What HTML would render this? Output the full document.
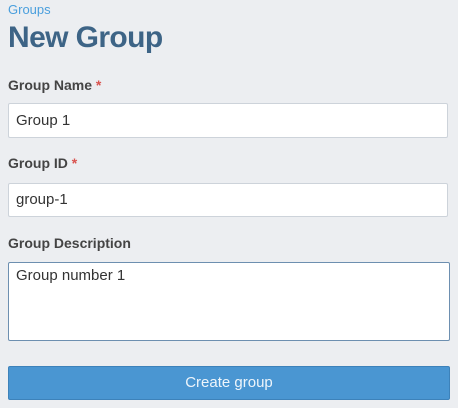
<!DOCTYPE html>
<html><head><style>
body{margin:0;background:#eceef1;font-family:"Liberation Sans",sans-serif;width:458px;height:408px;overflow:hidden;position:relative}
.a{position:absolute}
.bc{left:8px;top:2px;font-size:13px;color:#4a9fdd}
h1{position:absolute;left:8px;top:21px;margin:0;font-size:30px;font-weight:bold;color:#3d6486;letter-spacing:-0.6px}
.l{position:absolute;left:8px;font-size:14px;font-weight:bold;color:#444}
.l span{color:#d9534f}
.i{position:absolute;left:8px;width:440px;background:#fff;border:1px solid #cdd3da;border-radius:2px;font-size:15px;color:#333;box-sizing:border-box;padding-left:7px}
.btn{position:absolute;left:8px;top:366px;width:442px;height:34px;background:#4a96d2;border:1px solid #3d82ba;border-radius:2px;box-sizing:border-box;color:#eef5fb;font-size:15px;text-align:center;line-height:32px}
</style></head><body>
<div class="a bc">Groups</div>
<h1>New Group</h1>
<div class="l" style="top:77px">Group Name <span>*</span></div>
<div class="i" style="top:103px;height:35px;line-height:33px">Group 1</div>
<div class="l" style="top:155px">Group ID <span>*</span></div>
<div class="i" style="top:183px;height:34px;line-height:32px">group-1</div>
<div class="l" style="top:235px">Group Description</div>
<div class="i" style="top:262px;height:79px;line-height:18px;padding-top:4px;border-color:#6d8fb0;width:442px">Group number 1</div>
<div class="btn">Create group</div>
</body></html>
